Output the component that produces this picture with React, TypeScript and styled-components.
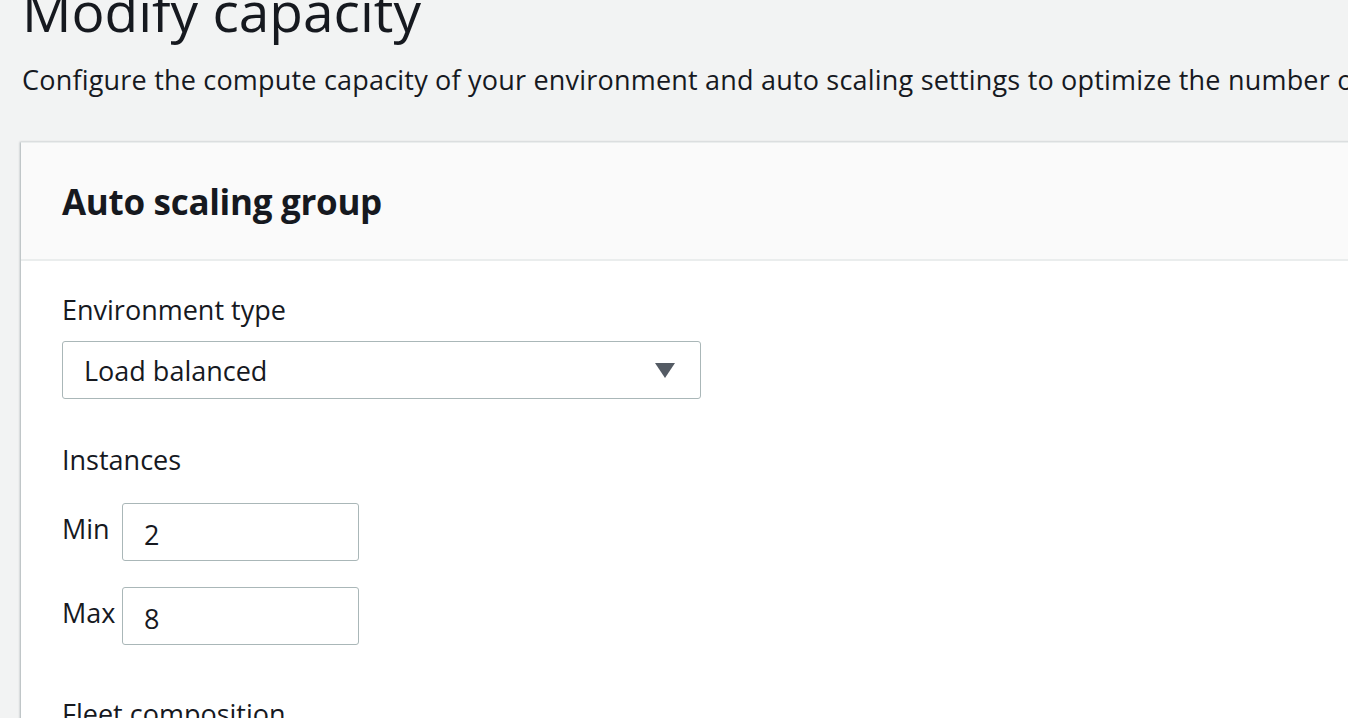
import React from "react";
import styled, { createGlobalStyle } from "styled-components";

const GlobalStyle = createGlobalStyle`
  html, body {
    margin: 0;
    padding: 0;
    background: #f2f3f3;
    overflow: hidden;
  }
  body {
    font-family: "Open Sans", "Noto Sans", sans-serif;
    color: #16191f;
  }
`;

const Page = styled.div`
  width: 1348px;
  height: 718px;
  padding-left: 22px;
  box-sizing: border-box;
  overflow: hidden;
`;

const Title = styled.h1`
  margin: -21px 0 0;
  font-size: 55px;
  line-height: 64px;
  font-weight: 400;
  white-space: nowrap;
`;

const Subtitle = styled.p`
  margin: 19px 0 0;
  font-size: 27px;
  line-height: 36px;
  letter-spacing: 0.2px;
  white-space: nowrap;
`;

const Card = styled.section`
  margin-top: 44px;
  margin-left: -1px;
  width: 1500px;
  background: #fff;
  border-top: 1px solid #eaeded;
  box-shadow: -1px 0 2px rgba(0, 28, 36, 0.3);
`;

const CardHeader = styled.header`
  height: 116px;
  background: #fafafa;
  border-bottom: 2px solid #eaeded;
  display: flex;
  align-items: center;
  padding-left: 41px;
`;

const CardTitle = styled.h2`
  margin: 0;
  font-size: 35px;
  font-weight: 700;
  letter-spacing: -0.3px;
`;

const CardBody = styled.div`
  padding: 32px 0 0 41px;
  display: flex;
  flex-direction: column;
`;

const Label = styled.div<{ $gap?: number; $top?: number }>`
  font-size: 27px;
  line-height: 34px;
  margin-top: ${(p) => p.$top ?? 0}px;
  margin-bottom: ${(p) => p.$gap ?? 14}px;
`;

const Select = styled.div`
  width: 639px;
  height: 58px;
  box-sizing: border-box;
  border: 1px solid #aab7b8;
  border-radius: 3px;
  display: flex;
  align-items: center;
  justify-content: space-between;
  padding: 0 24px 0 21px;
  font-size: 27px;
  margin-bottom: 44px;
`;

const Caret = styled.svg`
  width: 22px;
  height: 18px;
  fill: #545b64;
`;

const Row = styled.div`
  display: flex;
  align-items: center;
  gap: 8px;
  margin-bottom: 26px;
`;

const RowLabel = styled.span`
  font-size: 27px;
  width: 52px;
  margin-top: -8px;
`;

const NumberBox = styled.div`
  width: 237px;
  height: 58px;
  box-sizing: border-box;
  border: 1px solid #aab7b8;
  border-radius: 3px;
  display: flex;
  align-items: center;
  padding-left: 21px;
  font-size: 27px;
  padding-top: 4px;
`;

export default function App() {
  return (
    <Page>
      <GlobalStyle />
      <Title>Modify capacity</Title>
      <Subtitle>
        Configure the compute capacity of your environment and auto scaling settings to optimize the number of instances used.
      </Subtitle>
      <Card>
        <CardHeader>
          <CardTitle>Auto scaling group</CardTitle>
        </CardHeader>
        <CardBody>
          <Label>Environment type</Label>
          <Select>
            <span>Load balanced</span>
            <Caret viewBox="0 0 22 18">
              <path d="M1 2h20L11 17z" />
            </Caret>
          </Select>
          <Label $gap={26}>Instances</Label>
          <Row>
            <RowLabel>Min</RowLabel>
            <NumberBox>2</NumberBox>
          </Row>
          <Row>
            <RowLabel>Max</RowLabel>
            <NumberBox>8</NumberBox>
          </Row>
          <Label $top={26}>Fleet composition</Label>
        </CardBody>
      </Card>
    </Page>
  );
}
